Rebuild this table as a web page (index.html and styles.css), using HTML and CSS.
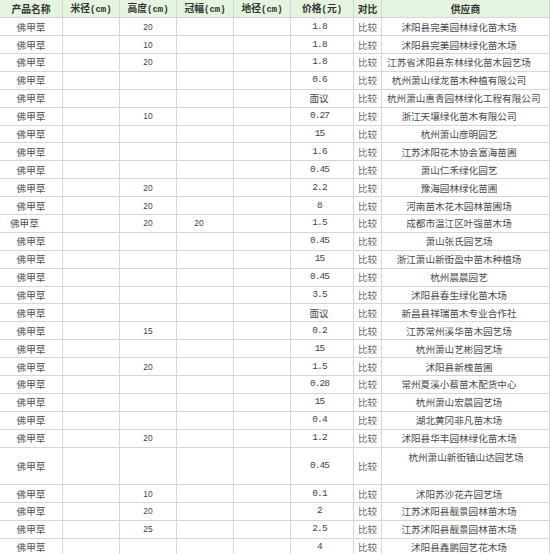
FILE: index.html
```html
<!DOCTYPE html>
<html lang="zh-CN">
<head>
<meta charset="utf-8">
<title>佛甲草报价</title>
<link rel="stylesheet" href="styles.css">
</head>
<body>
<table class="price-table">
  <colgroup>
    <col class="c-name"><col class="c-num"><col class="c-num"><col class="c-num"><col class="c-num"><col class="c-price"><col class="c-cmp"><col class="c-sup">
  </colgroup>
  <thead>
    <tr>
      <th>产品名称</th>
      <th>米径<span class="unit">(cm)</span></th>
      <th>高度<span class="unit">(cm)</span></th>
      <th>冠幅<span class="unit">(cm)</span></th>
      <th>地径<span class="unit">(cm)</span></th>
      <th>价格<span class="unit">(</span>元<span class="unit">)</span></th>
      <th>对比</th>
      <th>供应商</th>
    </tr>
  </thead>
  <tbody>
    <tr><td>佛甲草</td><td></td><td class="n">20</td><td></td><td></td><td class="p">1.8</td><td class="cmp">比较</td><td class="sup">沭阳县完美园林绿化苗木场</td></tr>
    <tr><td>佛甲草</td><td></td><td class="n">10</td><td></td><td></td><td class="p">1.8</td><td class="cmp">比较</td><td class="sup">沭阳县完美园林绿化苗木场</td></tr>
    <tr><td>佛甲草</td><td></td><td class="n">20</td><td></td><td></td><td class="p">1.8</td><td class="cmp">比较</td><td class="sup">江苏省沭阳县东林绿化苗木园艺场</td></tr>
    <tr><td>佛甲草</td><td></td><td class="n"></td><td></td><td></td><td class="p">0.6</td><td class="cmp">比较</td><td class="sup">杭州萧山绿龙苗木种植有限公司</td></tr>
    <tr><td>佛甲草</td><td></td><td class="n"></td><td></td><td></td><td class="p p-cn">面议</td><td class="cmp">比较</td><td class="sup">杭州萧山惠青园林绿化工程有限公司</td></tr>
    <tr><td>佛甲草</td><td></td><td class="n">10</td><td></td><td></td><td class="p">0.27</td><td class="cmp">比较</td><td class="sup">浙江天壤绿化苗木有限公司</td></tr>
    <tr><td>佛甲草</td><td></td><td class="n"></td><td></td><td></td><td class="p">15</td><td class="cmp">比较</td><td class="sup">杭州萧山彦明园艺</td></tr>
    <tr><td>佛甲草</td><td></td><td class="n"></td><td></td><td></td><td class="p">1.6</td><td class="cmp">比较</td><td class="sup">江苏沭阳花木协会富海苗圃</td></tr>
    <tr><td>佛甲草</td><td></td><td class="n"></td><td></td><td></td><td class="p">0.45</td><td class="cmp">比较</td><td class="sup">萧山仁禾绿化园艺</td></tr>
    <tr><td>佛甲草</td><td></td><td class="n">20</td><td></td><td></td><td class="p">2.2</td><td class="cmp">比较</td><td class="sup">豫海园林绿化苗圃</td></tr>
    <tr><td>佛甲草</td><td></td><td class="n">20</td><td></td><td></td><td class="p">8</td><td class="cmp">比较</td><td class="sup">河南苗木花木园林苗圃场</td></tr>
    <tr><td class="name-left">佛甲草</td><td></td><td class="n">20</td><td class="n n-off">20</td><td></td><td class="p">1.5</td><td class="cmp">比较</td><td class="sup">成都市温江区叶强苗木场</td></tr>
    <tr><td>佛甲草</td><td></td><td class="n"></td><td></td><td></td><td class="p">0.45</td><td class="cmp">比较</td><td class="sup">萧山张氏园艺场</td></tr>
    <tr><td>佛甲草</td><td></td><td class="n"></td><td></td><td></td><td class="p">15</td><td class="cmp">比较</td><td class="sup">浙江萧山新街盈中苗木种植场</td></tr>
    <tr><td>佛甲草</td><td></td><td class="n"></td><td></td><td></td><td class="p">0.45</td><td class="cmp">比较</td><td class="sup">杭州晨晨园艺</td></tr>
    <tr><td>佛甲草</td><td></td><td class="n"></td><td></td><td></td><td class="p">3.5</td><td class="cmp">比较</td><td class="sup">沭阳县春生绿化苗木场</td></tr>
    <tr><td>佛甲草</td><td></td><td class="n"></td><td></td><td></td><td class="p p-cn">面议</td><td class="cmp">比较</td><td class="sup">新昌县祥瑞苗木专业合作社</td></tr>
    <tr><td>佛甲草</td><td></td><td class="n">15</td><td></td><td></td><td class="p">0.2</td><td class="cmp">比较</td><td class="sup">江苏常州溪华苗木园艺场</td></tr>
    <tr><td>佛甲草</td><td></td><td class="n"></td><td></td><td></td><td class="p">15</td><td class="cmp">比较</td><td class="sup">杭州萧山艺彬园艺场</td></tr>
    <tr><td>佛甲草</td><td></td><td class="n">20</td><td></td><td></td><td class="p">1.5</td><td class="cmp">比较</td><td class="sup">沭阳县新槐苗圃</td></tr>
    <tr><td>佛甲草</td><td></td><td class="n"></td><td></td><td></td><td class="p">0.28</td><td class="cmp">比较</td><td class="sup">常州夏溪小蔡苗木配货中心</td></tr>
    <tr><td>佛甲草</td><td></td><td class="n"></td><td></td><td></td><td class="p">15</td><td class="cmp">比较</td><td class="sup">杭州萧山宏晨园艺场</td></tr>
    <tr><td>佛甲草</td><td></td><td class="n"></td><td></td><td></td><td class="p">0.4</td><td class="cmp">比较</td><td class="sup">湖北黄冈非凡苗木场</td></tr>
    <tr><td>佛甲草</td><td></td><td class="n">20</td><td></td><td></td><td class="p">1.2</td><td class="cmp">比较</td><td class="sup">沭阳县华丰园林绿化苗木场</td></tr>
    <tr class="tall"><td>佛甲草</td><td></td><td class="n"></td><td></td><td></td><td class="p">0.45</td><td class="cmp">比较</td><td class="sup sup-top">杭州萧山新街镇山达园艺场</td></tr>
    <tr><td>佛甲草</td><td></td><td class="n">10</td><td></td><td></td><td class="p">0.1</td><td class="cmp">比较</td><td class="sup">沭阳苏沙花卉园艺场</td></tr>
    <tr><td>佛甲草</td><td></td><td class="n">20</td><td></td><td></td><td class="p">2</td><td class="cmp">比较</td><td class="sup">江苏沭阳县靓景园林苗木场</td></tr>
    <tr><td>佛甲草</td><td></td><td class="n">25</td><td></td><td></td><td class="p">2.5</td><td class="cmp">比较</td><td class="sup">江苏沭阳县靓景园林苗木场</td></tr>
    <tr><td>佛甲草</td><td></td><td class="n"></td><td></td><td></td><td class="p">4</td><td class="cmp">比较</td><td class="sup">沭阳县鑫鹏园艺花木场</td></tr>
  </tbody>
</table>
</body>
</html>
```
FILE: styles.css
```css
html, body {
  margin: 0;
  padding: 0;
  background: #ffffff;
}

body {
  font-family: "Noto Sans CJK SC", "Noto Sans", sans-serif;
  font-size: 9.6px;
  color: #505050;
}

.price-table {
  table-layout: fixed;
  border-collapse: separate;
  border-spacing: 0;
  width: 550px;
  margin: -1px 0 0 -1px;
  border-top: 1px solid #d6d6d6;
  border-left: 1px solid #d6d6d6;
}

.c-name { width: 63px; }
.c-num { width: 57px; }
.c-price { width: 63px; }
.c-cmp { width: 28px; }
.c-sup { width: 168px; }

.price-table th,
.price-table td {
  box-sizing: border-box;
  border-right: 1px solid #d6d6d6;
  border-bottom: 1px solid #d6d6d6;
  padding: 0;
  text-align: center;
  vertical-align: middle;
  white-space: nowrap;
  line-height: 12px;
  overflow: visible;
}

.price-table th {
  height: 18.2px;
  background: #e4f4df;
  color: #333333;
  font-weight: bold;
  font-size: 9.8px;
}

.price-table th .unit {
  font-family: "Liberation Mono", "DejaVu Sans Mono", monospace;
  font-size: 9px;
  font-weight: bold;
}

.price-table td {
  height: 17.9px;
}

.price-table tr.tall td {
  height: 37.6px;
}

.price-table td.n {
  font-family: "Liberation Sans", Arial, sans-serif;
  font-size: 8.4px;
  color: #444444;
}

.price-table td.n-off {
  padding-right: 12px;
}

.price-table td.p {
  font-family: "Liberation Mono", "DejaVu Sans Mono", monospace;
  font-size: 9.5px;
  letter-spacing: -0.9px;
  padding-right: 5px;
  color: #444444;
}

.price-table td.p-cn {
  font-family: "Noto Sans CJK SC", sans-serif;
  font-size: 9.6px;
  letter-spacing: 0;
  padding-right: 6px;
}

.price-table td.cmp {
  color: #6a6a6a;
}

.price-table td.sup {
  padding-left: 5px;
  padding-right: 18px;
  color: #4a4a4a;
}

.price-table td.sup-top {
  vertical-align: top;
  padding-top: 3px;
  padding-left: 19px;
}

.price-table td.name-left {
  text-align: left;
  padding-left: 10px;
}
```
